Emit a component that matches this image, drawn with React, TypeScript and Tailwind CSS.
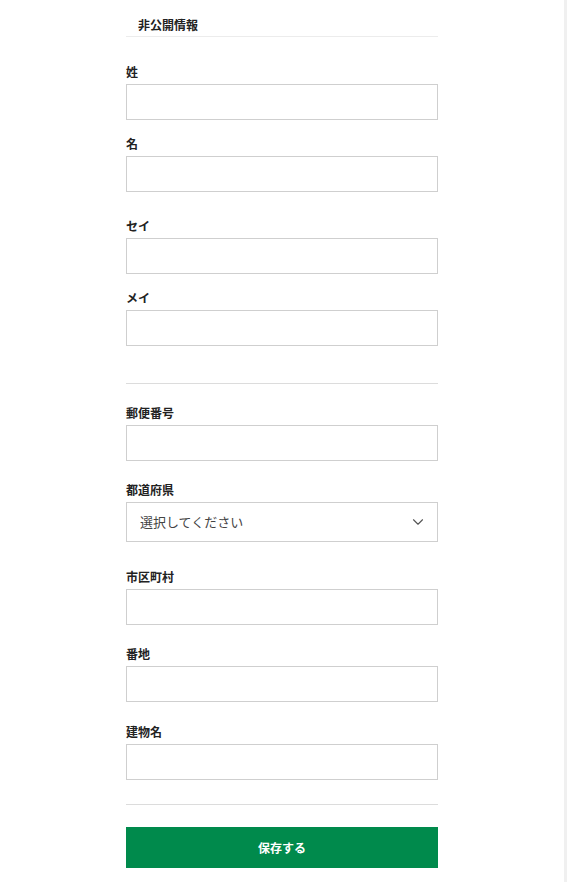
import { ChevronDown } from "lucide-react";

const font = { fontFamily: "'Noto Sans CJK JP', 'Noto Sans', sans-serif" };

const labelClass = "block text-[12px] leading-[18px] font-bold text-[#222] mb-[3px]";
const inputClass = "block w-full h-[36px] border border-[#cfcfcf] bg-white px-3 text-[13px] focus:outline-none";

function Field({ label, className }: { label: string; className?: string }) {
  return (
    <div className={className}>
      <label className={labelClass}>{label}</label>
      <input type="text" className={inputClass} />
    </div>
  );
}

export default function App() {
  return (
    <div className="flex min-h-[882px] bg-white" style={font}>
      <div className="flex-1 flex justify-center">
        <form className="w-[312px] pt-4" onSubmit={(e) => e.preventDefault()}>
          {/* Section header */}
          <div className="pl-3 pb-[2px] border-b border-[#ececec]">
            <h2 className="text-[12px] leading-[18px] font-bold text-[#222]">非公開情報</h2>
          </div>

          <Field label="姓" className="mt-[26px]" />
          <Field label="名" className="mt-[15px]" />
          <Field label="セイ" className="mt-[25px]" />
          <Field label="メイ" className="mt-[15px]" />

          <div className="mt-[37px] border-t border-[#dcdcdc]" />

          <Field label="郵便番号" className="mt-[20px]" />

          <div className="mt-[20px]">
            <label className={labelClass}>都道府県</label>
            <div className="relative">
              <select
                defaultValue=""
                className="block w-full h-[40px] border border-[#cfcfcf] bg-white pl-[13px] pr-10 text-[13px] text-[#444] appearance-none focus:outline-none"
                style={font}
              >
                <option value="">選択してください</option>
              </select>
              <ChevronDown
                className="w-[18px] h-[18px] text-[#555] absolute right-[11px] top-1/2 -translate-y-1/2 pointer-events-none"
                strokeWidth={1.5}
              />
            </div>
          </div>

          <Field label="市区町村" className="mt-[26px]" />
          <Field label="番地" className="mt-[20px]" />
          <Field label="建物名" className="mt-[21px]" />

          <div className="mt-[24px] border-t border-[#dcdcdc]" />

          <button
            type="submit"
            className="mt-[22px] w-full h-[41px] bg-[#008a4c] text-white text-[12px] font-bold"
          >
            保存する
          </button>
        </form>
      </div>
      <div className="w-[3px] bg-[#f0f0f0]" />
    </div>
  );
}
